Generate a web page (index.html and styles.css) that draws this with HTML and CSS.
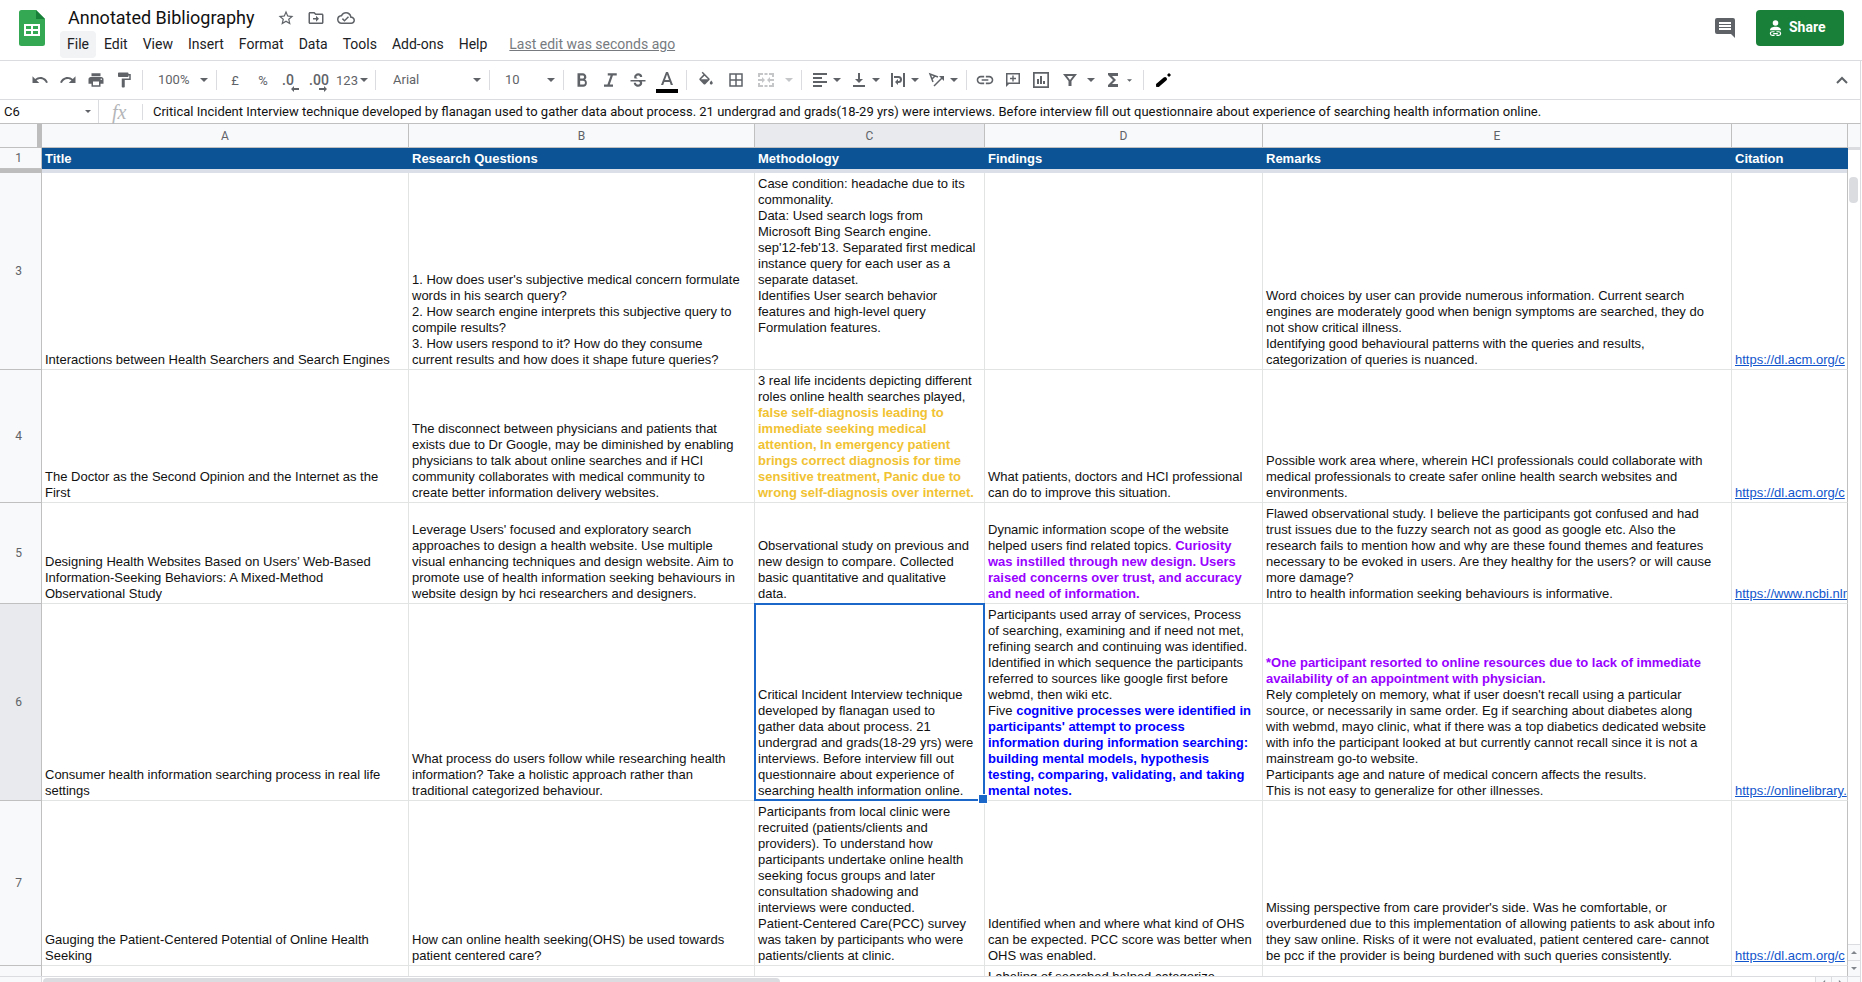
FILE: index.html
```html
<!DOCTYPE html>
<html lang="en">
<head>
<meta charset="utf-8">
<title>Annotated Bibliography</title>
<link rel="stylesheet" href="styles.css">
</head>
<body>
<svg class="defs" aria-hidden="true">
  <symbol id="arrow" viewBox="0 0 8 4"><path d="M0 0h8L4 4z"/></symbol>
</svg>

<header class="header">
  <svg class="logo" viewBox="0 0 26 36" aria-hidden="true">
    <path fill="#34a853" d="M2.500 0H17l9 9v24.500a2.500 2.500 0 0 1-2.500 2.500h-21A2.500 2.500 0 0 1 0 33.500v-31A2.500 2.500 0 0 1 2.500 0z"/>
    <path fill="#188038" d="M17 0l9 9h-9z"/>
    <path fill="#fff" fill-rule="evenodd" d="M5 14h16v12H5zM7 16v3h5v-3zM14 16v3h5v-3zM7 21v3h5v-3zM14 21v3h5v-3z"/>
  </svg>
  <div class="doc">
    <div class="title-row">
      <h1 class="title">Annotated Bibliography</h1>
      <button class="title-btn" aria-label="Star"><svg viewBox="0 0 24 24"><path d="M22 9.240l-7.190-.62L12 2 9.190 8.630 2 9.240l5.460 4.730L5.820 21 12 17.270 18.180 21l-1.630-7.030L22 9.240zM12 15.400l-3.760 2.270 1-4.280-3.320-2.880 4.380-.38L12 6.100l1.710 4.040 4.380.38-3.320 2.880 1 4.280L12 15.400z"/></svg></button>
      <button class="title-btn" aria-label="Move"><svg viewBox="0 0 24 24"><path d="M20 6h-8l-2-2H4c-1.100 0-2 .9-2 2v12c0 1.100.9 2 2 2h16c1.100 0 2-.9 2-2V8c0-1.100-.9-2-2-2zm0 12H4V6h5.170l2 2H20v10zm-8-1l4-4-4-4v3H8v2h4v3z"/></svg></button>
      <button class="title-btn" aria-label="Saved to Drive"><svg viewBox="0 0 24 24"><path d="M19.350 10.040A7.490 7.490 0 0 0 12 4C9.110 4 6.600 5.640 5.350 8.040A5.994 5.994 0 0 0 0 14c0 3.310 2.690 6 6 6h13c2.760 0 5-2.240 5-5 0-2.640-2.050-4.780-4.650-4.960zM19 18H6c-2.210 0-4-1.790-4-4 0-2.050 1.530-3.760 3.560-3.970l1.070-.11.500-.95A5.469 5.469 0 0 1 12 6c2.620 0 4.880 1.860 5.390 4.430l.3 1.500 1.530.11A2.980 2.980 0 0 1 22 15c0 1.650-1.350 3-3 3zm-9-3.820l-2.090-2.090L6.500 13.500 10 17l6.010-6.010-1.410-1.410z"/></svg></button>
    </div>
    <nav class="menu">
      <button class="menu-item active">File</button>
      <button class="menu-item">Edit</button>
      <button class="menu-item">View</button>
      <button class="menu-item">Insert</button>
      <button class="menu-item">Format</button>
      <button class="menu-item">Data</button>
      <button class="menu-item">Tools</button>
      <button class="menu-item">Add-ons</button>
      <button class="menu-item">Help</button>
      <a class="last-edit" href="#history">Last edit was seconds ago</a>
    </nav>
  </div>
  <button class="comments" aria-label="Comments"><svg viewBox="0 0 20 20"><path fill-rule="evenodd" d="M2 0h16a2 2 0 0 1 2 2v18l-4-4H2a2 2 0 0 1-2-2V2a2 2 0 0 1 2-2zM4 4v2h12V4zM4 7v2h12V7zM4 10v2h12v-2z"/></svg></button>
  <button class="share">
    <svg viewBox="0 0 14 18" aria-hidden="true"><circle cx="7" cy="3" r="3" fill="#fff"/><path fill="#fff" d="M1 11c0-3 3-4 6-4s6 1 6 4z"/><path fill="none" stroke="#fff" stroke-width="1.300" d="M6 12.500H3.500a2 2 0 0 0 0 4H6M8 12.500h2.500a2 2 0 0 1 0 4H8M4.500 14.500h5"/></svg>
    Share
  </button>
</header>

<div class="toolbar" role="toolbar">
  <button class="tool" aria-label="Undo"><svg viewBox="0 0 24 24"><path d="M12.500 8c-2.650 0-5.050.99-6.900 2.600L2 7v9h9l-3.620-3.620c1.390-1.160 3.160-1.880 5.120-1.880 3.540 0 6.550 2.310 7.600 5.500l2.370-.78C21.080 11.030 17.150 8 12.500 8z"/></svg></button>
  <button class="tool" aria-label="Redo"><svg viewBox="0 0 24 24"><path d="M18.400 10.600C16.550 8.990 14.150 8 11.500 8c-4.650 0-8.580 3.030-9.960 7.220L3.900 16c1.050-3.190 4.050-5.500 7.600-5.500 1.950 0 3.730.72 5.120 1.880L13 16h9V7l-3.600 3.600z"/></svg></button>
  <button class="tool" aria-label="Print"><svg viewBox="0 0 24 24"><path d="M19 8H5c-1.660 0-3 1.340-3 3v6h4v4h12v-4h4v-6c0-1.660-1.340-3-3-3zm-3 11H8v-5h8v5zm3-7c-.55 0-1-.45-1-1s.45-1 1-1 1 .45 1 1-.45 1-1 1zm-1-9H6v4h12V3z"/></svg></button>
  <button class="tool" aria-label="Paint format"><svg viewBox="0 0 24 24"><path d="M18 4V3c0-.55-.45-1-1-1H5c-.55 0-1 .45-1 1v4c0 .55.45 1 1 1h12c.55 0 1-.45 1-1V6h1v4H9v11c0 .55.45 1 1 1h2c.55 0 1-.45 1-1v-9h8V4h-3z"/></svg></button>
  <span class="sep"></span>
  <label class="drop"><select aria-label="Zoom"><option>100%</option></select><svg class="arrow"><use href="#arrow"/></svg></label>
  <span class="sep"></span>
  <button class="tool">£</button>
  <button class="tool">%</button>
  <button class="tool dec single" aria-label="Decrease decimal places">.0<svg viewBox="0 0 8 6"><path d="M0 3l3-3v2h5v2H3v2z"/></svg></button>
  <button class="tool dec" aria-label="Increase decimal places">.00<svg viewBox="0 0 8 6"><path d="M8 3L5 0v2H0v2h5v2z"/></svg></button>
  <button class="tool formats">123<svg class="arrow"><use href="#arrow"/></svg></button>
  <span class="sep"></span>
  <label class="drop font"><select aria-label="Font"><option>Arial</option></select><svg class="arrow"><use href="#arrow"/></svg></label>
  <span class="sep"></span>
  <label class="drop"><select aria-label="Font size"><option>10</option></select><svg class="arrow"><use href="#arrow"/></svg></label>
  <span class="sep"></span>
  <button class="tool" aria-label="Bold"><svg viewBox="0 0 24 24"><path d="M16 11.300c1.100-.7 1.800-1.900 1.800-3.100C17.800 5.300 15.900 3 13 3H6v18h7.800c2.600 0 4.700-2.200 4.700-5 0-2.200-1-3.900-2.500-4.700zM9.500 6H13c1 0 1.800.9 1.800 2s-.8 2-1.800 2H9.500zM13.500 18h-4v-5h4a2.500 2.500 0 0 1 0 5z"/></svg></button>
  <button class="tool" aria-label="Italic"><svg viewBox="0 0 24 24"><path d="M9 3v3h3.800L8.600 18H4v3h12v-3h-4.300L15.900 6H21V3z"/></svg></button>
  <button class="tool" aria-label="Strikethrough"><svg viewBox="0 0 24 24"><path d="M6.850 8.080C6.850 5.370 9.450 3 12.240 3c1.640 0 3 .49 3.900 1.280.77.65 1.460 1.730 1.460 3.740h-3.010c0-.31-.05-.59-.15-.85-.29-.86-1.200-1.280-2.250-1.280-1.860 0-2.340 1.020-2.340 1.700 0 .48.25 1.380.74 1.710.38.25.77.48 1.410.70H7.390c-.21-.34-.54-.89-.54-1.920zM22 14v-2H2v2h10.620c1.150.45 1.960.75 1.960 1.970 0 1-.81 2.170-2.280 2.170-1.540 0-2.930-.54-2.930-2.510H6.400c0 .55.08 1.130.24 1.580.81 2.290 3.290 3.800 5.670 3.800 2.270 0 5.300-1.390 5.300-4.550 0-.3-.01-1.160-.48-2.460z"/></svg></button>
  <button class="tool roomy color" aria-label="Text color"><svg viewBox="0 0 22 22"><path fill-rule="evenodd" d="M10 1h2l5 13h-2.200l-1.100-3H8.300l-1.100 3H5zM9 9h4l-2-5.500z"/><path fill="#000" d="M0 18h22v4H0z"/></svg></button>
  <span class="sep"></span>
  <button class="tool roomy" aria-label="Fill color"><svg viewBox="0 0 24 24"><path d="M16.560 9.940L7.620 1 6.210 2.410l2.380 2.380-5.150 5.150c-.59.59-.59 1.540 0 2.120l5.500 5.500c.29.29.68.44 1.060.44s.77-.15 1.060-.44l5.500-5.500c.59-.58.59-1.530 0-2.120zM5.210 11L10 6.210 14.790 11H5.210zM19 12.500s-2 2.170-2 3.500c0 1.100.9 2 2 2s2-.9 2-2c0-1.330-2-3.500-2-3.500z"/></svg></button>
  <button class="tool roomy" aria-label="Borders"><svg viewBox="0 0 24 24"><path d="M3 3v18h18V3H3zm8 16H5v-6h6v6zm0-8H5V5h6v6zm8 8h-6v-6h6v6zm0-8h-6V5h6v6z"/></svg></button>
  <button class="tool roomy" aria-label="Merge cells" disabled><svg viewBox="0 0 18 18"><path d="M1 2h5v2H3v2H1zM7.500 2h3v2h-3zM12 2h5v4h-2V4h-3zM1 12h2v2h3v2H1zM7.500 14h3v2h-3zM15 12h2v4h-5v-2h3zM1 8h4V6l3 3-3 3v-2H1zM17 8h-4V6l-3 3 3 3v-2h4z"/></svg></button>
  <button class="tool caret" aria-label="Merge options" disabled><svg class="arrow"><use href="#arrow"/></svg></button>
  <span class="sep"></span>
  <button class="tool pair" aria-label="Horizontal align"><svg viewBox="0 0 18 18"><path d="M2 2h14v2H2zM2 6h9v2H2zM2 10h14v2H2zM2 14h9v2H2z"/></svg><svg class="arrow"><use href="#arrow"/></svg></button>
  <button class="tool pair" aria-label="Vertical align"><svg viewBox="0 0 18 18"><path d="M8 2h2v6h3l-4 4-4-4h3zM3 14h12v2H3z"/></svg><svg class="arrow"><use href="#arrow"/></svg></button>
  <button class="tool pair" aria-label="Text wrapping"><svg viewBox="0 0 18 18"><path d="M2 2h2v14H2zM14 2h2v14h-2z"/><path d="M5 5h4.500a3.500 3.500 0 0 1 0 7H9v2l-3-3 3-3v2h.5a1.500 1.500 0 0 0 0-3H5z"/></svg><svg class="arrow"><use href="#arrow"/></svg></button>
  <button class="tool pair" aria-label="Text rotation"><svg viewBox="0 0 18 18"><path fill="none" stroke="#5f6368" stroke-width="1.500" d="M5 11L2 3l8 3M4 8l3-3M6 15l8-8"/><path d="M16 5v5l-5-5z"/></svg><svg class="arrow"><use href="#arrow"/></svg></button>
  <span class="sep"></span>
  <button class="tool big" aria-label="Insert link"><svg viewBox="0 0 24 24"><path d="M3.900 12c0-1.710 1.390-3.100 3.100-3.100h4V7H7c-2.760 0-5 2.240-5 5s2.240 5 5 5h4v-1.900H7c-1.710 0-3.100-1.390-3.100-3.100zM8 13h8v-2H8v2zm9-6h-4v1.900h4c1.710 0 3.100 1.390 3.100 3.100s-1.390 3.100-3.100 3.100h-4V17h4c2.760 0 5-2.240 5-5s-2.240-5-5-5z"/></svg></button>
  <button class="tool" aria-label="Insert comment"><svg viewBox="0 0 18 18"><path fill-rule="evenodd" d="M2 2h14v11H5l-3 3zM3.500 3.500v8h11v-8zM8.300 4.500h1.400v2.300H12v1.400H9.700v2.300H8.300V8.200H6V6.800h2.300z"/></svg></button>
  <button class="tool" aria-label="Insert chart"><svg viewBox="0 0 18 18"><path fill-rule="evenodd" d="M1 1h16v16H1zM2.700 2.700v12.600h12.600V2.700zM5 8h2v5H5zM8 5h2v8H8zM11 10h2v3h-2z"/></svg></button>
  <button class="tool" aria-label="Filter"><svg viewBox="0 0 18 18"><path fill-rule="evenodd" d="M3 3h14l-5.500 7v5h-3v-5zM7 5l3 4 3-4z"/></svg></button>
  <button class="tool caret" aria-label="Filter views"><svg class="arrow"><use href="#arrow"/></svg></button>
  <button class="tool" aria-label="Functions"><svg viewBox="0 0 18 18"><path d="M4 2h10v3H8l4 4-4 4h6v3H4v-2l5-5-5-5z"/></svg></button>
  <button class="tool tiny" aria-label="More functions"><svg class="arrow"><use href="#arrow"/></svg></button>
  <span class="sep"></span>
  <button class="tool roomy" aria-label="Input tools"><svg viewBox="0 0 18 18"><path fill="none" stroke="#000" stroke-width="4" stroke-linecap="round" d="M4 14l7-6"/><path fill="#000" d="M2 16l1-4 3 3zM13 4l2-2 2 2-2 2z"/></svg></button>
  <button class="tool collapse" aria-label="Hide the menus"><svg viewBox="0 0 18 18"><path fill="none" stroke="#5f6368" stroke-width="2" d="M4 12l5-5 5 5"/></svg></button>
</div>

<div class="formula-bar">
  <div class="name-box"><input type="text" aria-label="Name box" value="C6"><svg class="arrow"><use href="#arrow"/></svg></div>
  <span class="fx">fx</span>
  <input class="formula" type="text" aria-label="Formula" value="Critical Incident Interview technique developed by flanagan used to gather data about process. 21 undergrad and grads(18-29 yrs) were interviews. Before interview fill out questionnaire about experience of searching health information online.">
</div>

<main class="sheet">
  <div class="grid">
    <table>
      <colgroup><col class="c-num"><col class="c-a"><col class="c-b"><col class="c-c"><col class="c-d"><col class="c-e"><col></colgroup>
      <thead>
        <tr class="letters"><th class="corner"></th><th>A</th><th>B</th><th class="on">C</th><th>D</th><th>E</th><th></th></tr>
        <tr class="labels"><th class="num">1</th><th>Title</th><th>Research Questions</th><th>Methodology</th><th>Findings</th><th>Remarks</th><th>Citation</th></tr>
        <tr class="freeze"><td></td><td colspan="6"></td></tr>
      </thead>
      <tbody>
        <tr>
          <th class="num">3</th>
          <td>Interactions between Health Searchers and Search Engines</td>
          <td>1. How does user's subjective medical concern formulate<br>words in his search query?<br>2. How search engine interprets this subjective query to<br>compile results?<br>3. How users respond to it? How do they consume<br>current results and how does it shape future queries?</td>
          <td>Case condition: headache due to its<br>commonality.<br>Data: Used search logs from<br>Microsoft Bing Search engine.<br>sep'12-feb'13. Separated first medical<br>instance query for each user as a<br>separate dataset.<br>Identifies User search behavior<br>features and high-level query<br>Formulation features.<br><br>&nbsp;</td>
          <td></td>
          <td>Word choices by user can provide numerous information. Current search<br>engines are moderately good when benign symptoms are searched, they do<br>not show critical illness.<br>Identifying good behavioural patterns with the queries and results,<br>categorization of queries is nuanced.</td>
          <td><a href="https://dl.acm.org/c">https://dl.acm.org/c</a></td>
        </tr>
        <tr>
          <th class="num">4</th>
          <td>The Doctor as the Second Opinion and the Internet as the<br>First</td>
          <td>The disconnect between physicians and patients that<br>exists due to Dr Google, may be diminished by enabling<br>physicians to talk about online searches and if HCI<br>community collaborates with medical community to<br>create better information delivery websites.</td>
          <td>3 real life incidents depicting different<br>roles online health searches played,<br><b class="gold">false self-diagnosis leading to<br>immediate seeking medical<br>attention, In emergency patient<br>brings correct diagnosis for time<br>sensitive treatment, Panic due to<br>wrong self-diagnosis over internet.</b></td>
          <td>What patients, doctors and HCI professional<br>can do to improve this situation.</td>
          <td>Possible work area where, wherein HCI professionals could collaborate with<br>medical professionals to create safer online health search websites and<br>environments.</td>
          <td><a href="https://dl.acm.org/c">https://dl.acm.org/c</a></td>
        </tr>
        <tr>
          <th class="num">5</th>
          <td>Designing Health Websites Based on Users’ Web-Based<br>Information-Seeking Behaviors: A Mixed-Method<br>Observational Study</td>
          <td>Leverage Users' focused and exploratory search<br>approaches to design a health website. Use multiple<br>visual enhancing techniques and design website. Aim to<br>promote use of health information seeking behaviours in<br>website design by hci researchers and designers.</td>
          <td>Observational study on previous and<br>new design to compare. Collected<br>basic quantitative and qualitative<br>data.</td>
          <td>Dynamic information scope of the website<br>helped users find related topics. <b class="purple">Curiosity<br>was instilled through new design. Users<br>raised concerns over trust, and accuracy<br>and need of information.</b></td>
          <td>Flawed observational study. I believe the participants got confused and had<br>trust issues due to the fuzzy search not as good as google etc. Also the<br>research fails to mention how and why are these found themes and features<br>necessary to be evoked in users. Are they healthy for the users? or will cause<br>more damage?<br>Intro to health information seeking behaviours is informative.</td>
          <td><a href="https://www.ncbi.nlm">https://www.ncbi.nlm</a></td>
        </tr>
        <tr>
          <th class="num on">6</th>
          <td>Consumer health information searching process in real life<br>settings</td>
          <td>What process do users follow while researching health<br>information? Take a holistic approach rather than<br>traditional categorized behaviour.</td>
          <td class="selected">Critical Incident Interview technique<br>developed by flanagan used to<br>gather data about process. 21<br>undergrad and grads(18-29 yrs) were<br>interviews. Before interview fill out<br>questionnaire about experience of<br>searching health information online.</td>
          <td>Participants used array of services, Process<br>of searching, examining and if need not met,<br>refining search and continuing was identified.<br>Identified in which sequence the participants<br>referred to sources like google first before<br>webmd, then wiki etc.<br>Five <b class="blue">cognitive processes were identified in<br>participants' attempt to process<br>information during information searching:<br>building mental models, hypothesis<br>testing, comparing, validating, and taking<br>mental notes.</b></td>
          <td><b class="purple">*One participant resorted to online resources due to lack of immediate<br>availability of an appointment with physician.</b><br>Rely completely on memory, what if user doesn't recall using a particular<br>source, or necessarily in same order. Eg if searching about diabetes along<br>with webmd, mayo clinic, what if there was a top diabetics dedicated website<br>with info the participant looked at but currently cannot recall since it is not a<br>mainstream go-to website.<br>Participants age and nature of medical concern affects the results.<br>This is not easy to generalize for other illnesses.</td>
          <td><a href="https://onlinelibrary.">https://onlinelibrary.</a></td>
        </tr>
        <tr>
          <th class="num">7</th>
          <td>Gauging the Patient-Centered Potential of Online Health<br>Seeking</td>
          <td>How can online health seeking(OHS) be used towards<br>patient centered care?</td>
          <td>Participants from local clinic were<br>recruited (patients/clients and<br>providers). To understand how<br>participants undertake online health<br>seeking focus groups and later<br>consultation shadowing and<br>interviews were conducted.<br>Patient-Centered Care(PCC) survey<br>was taken by participants who were<br>patients/clients at clinic.</td>
          <td>Identified when and where what kind of OHS<br>can be expected. PCC score was better when<br>OHS was enabled.</td>
          <td>Missing perspective from care provider's side. Was he comfortable, or<br>overburdened due to this implementation of allowing patients to ask about info<br>they saw online. Risks of it were not evaluated, patient centered care- cannot<br>be pcc if the provider is being burdened with such queries consistently.</td>
          <td><a href="https://dl.acm.org/c">https://dl.acm.org/c</a></td>
        </tr>
        <tr><th class="num"></th><td></td><td></td><td></td><td>Labeling of searched helped categorize</td><td></td><td></td></tr>
      </tbody>
    </table>
  </div>
  <div class="vbar">
    <div class="vbar-head"></div>
    <div class="vtrack"><div class="vthumb"></div></div>
    <button class="step" aria-label="Scroll up"><svg class="up"><use href="#arrow"/></svg></button>
    <button class="step" aria-label="Scroll down"><svg><use href="#arrow"/></svg></button>
  </div>
  <div class="hbar">
    <div class="hpad"></div>
    <div class="htrack"><div class="hthumb"></div></div>
    <button class="step side" aria-label="Scroll left"><svg class="left"><use href="#arrow"/></svg></button>
    <button class="step side" aria-label="Scroll right"><svg class="right"><use href="#arrow"/></svg></button>
    <div class="hend"></div>
  </div>
</main>
</body>
</html>
```
FILE: styles.css
```css
* { box-sizing: border-box; }

body {
  margin: 0;
  height: 100vh;
  display: flex;
  flex-direction: column;
  overflow: hidden;
  background: #fff;
  color: #111;
  font-family: Roboto, "Liberation Sans", sans-serif;
}

button, input, select {
  border: 0;
  padding: 0;
  margin: 0;
  background: none;
  font: inherit;
  color: inherit;
  outline: 0;
}

select { appearance: none; }

.defs { position: absolute; width: 0; height: 0; }

/* Header */
.header {
  display: flex;
  align-items: flex-start;
  flex: none;
  height: 61px;
  padding: 0 18px 0 19px;
  border-bottom: 1px solid #dadce0;
}

.logo { width: 26px; height: 36px; margin-top: 10px; flex: none; }
.doc { flex: 1; min-width: 0; padding-left: 15px; }

.title-row { display: flex; align-items: center; height: 31px; padding: 5px 0 0 8px; }
.title { margin: 0 16px 0 0; font-size: 18px; line-height: 26px; font-weight: 400; white-space: nowrap; }
.title-btn { display: flex; justify-content: center; width: 30px; }
.title-btn svg { width: 18px; height: 18px; fill: #5f6368; }

.menu { display: flex; align-items: center; gap: 1px; }
.menu-item {
  height: 27px;
  padding: 0 7px;
  border-radius: 4px;
  font-size: 14px;
  line-height: 27px;
  color: #202124;
}
.menu-item.active { background: #f1f3f4; }
.last-edit { margin-left: 14px; font-size: 14px; line-height: 27px; color: #777b80; white-space: nowrap; }

.comments { margin: 18px 21px 0 0; width: 20px; height: 20px; }
.comments svg { display: block; width: 20px; height: 20px; fill: #5f6368; }

.share {
  display: flex;
  align-items: center;
  gap: 7px;
  width: 88px;
  height: 36px;
  margin-top: 10px;
  padding: 0 0 2px 13px;
  border-radius: 4px;
  background: #188038;
  color: #fff;
  font-size: 14px;
  font-weight: 700;
}
.share svg { width: 13px; height: 17px; margin-top: 2px; }

/* Toolbar */
.toolbar {
  display: flex;
  align-items: center;
  flex: none;
  height: 39px;
  margin-right: 1px;
  padding: 0 4px 0 26px;
  border-right: 1px solid #dadce0;
  border-bottom: 1px solid #dadce0;
  color: #5f6368;
  font-size: 13px;
}

.tool { display: flex; align-items: center; justify-content: center; flex: none; width: 28px; height: 28px; }
.tool svg { width: 18px; height: 18px; fill: #5f6368; flex: none; }
.tool:disabled svg { fill: #c4c6c8; }
.tool.roomy { width: 30px; }
.tool.big svg { width: 20px; height: 20px; }
.tool.color svg { width: 22px; height: 22px; margin-top: 4px; }
.tool.caret { width: 16px; }
.tool.tiny { width: 12px; justify-content: flex-start; }
.tool.pair { width: 39px; gap: 4px; }
.tool.formats { width: 38px; gap: 2px; }
.tool.dec { position: relative; font-size: 14px; font-weight: 500; }
.tool.dec.single { padding-right: 6px; }
.tool.dec svg { position: absolute; right: 6px; bottom: 2px; width: 8px; height: 6px; }
.tool .arrow, .arrow { width: 8px; height: 4px; fill: #5f6368; flex: none; }
.tool.tiny .arrow { width: 5px; height: 3px; }
.tool.collapse { margin-left: auto; }

.sep { width: 1px; height: 20px; margin: 0 4px; background: #dadce0; flex: none; }

.drop { display: flex; align-items: center; width: 65px; padding: 0 4px 0 11px; flex: none; }
.drop.font { width: 105px; padding-left: 13px; }
.drop select { flex: 1; min-width: 0; line-height: 20px; }

/* Formula bar */
.formula-bar {
  display: flex;
  align-items: center;
  flex: none;
  height: 24px;
  margin-right: 1px;
  border-right: 1px solid #dadce0;
  border-bottom: 1px solid #c0c0c0;
  font-size: 13px;
}
.name-box { display: flex; align-items: center; width: 99px; height: 23px; padding: 0 7px 0 4px; border-right: 1px solid #dadce0; }
.name-box input { flex: 1; min-width: 0; }
.name-box .arrow { width: 6px; height: 3px; }
.fx {
  width: 44px;
  padding-left: 13px;
  border-right: 1px solid #dadce0;
  color: #b4b6b9;
  font: italic 20px/16px "Liberation Serif", serif;
}
.formula { flex: 1; min-width: 0; padding-left: 10px; }

/* Sheet */
.sheet {
  display: grid;
  grid-template: minmax(0, 1fr) 6px / minmax(0, 1fr) 12px;
  flex: 1;
  min-height: 0;
  margin-right: 1px;
  border-right: 1px solid #dadce0;
}
.grid { overflow: hidden; }

table { width: 100%; table-layout: fixed; border-collapse: separate; border-spacing: 0; }
.c-num { width: 42px; }
.c-a { width: 367px; }
.c-b { width: 346px; }
.c-c { width: 230px; }
.c-d { width: 278px; }
.c-e { width: 469px; }

th, td {
  padding: 3px 3px 1px;
  border-right: 1px solid #e2e3e3;
  border-bottom: 1px solid #e2e3e3;
  vertical-align: bottom;
  text-align: left;
  font: 13px/16px "Liberation Sans", Arial, sans-serif;
  white-space: nowrap;
}
td:last-child { overflow: hidden; border-right-color: #c0c0c0; }
td a { color: #1155cc; }

.letters th, .num {
  background: #f8f9fa;
  border-color: #c0c0c0;
  color: #5f6368;
  font: 12px/19px Roboto, sans-serif;
  text-align: center;
}
.letters th.corner { border-right: 5px solid #bdbdbd; }
.num { padding: 0 4px 0 0; vertical-align: middle; line-height: 16px; }
.letters th.on, .num.on { background: #e8eaed; }

.labels th:not(.num) { background: #0b5394; border-color: #0b5394; color: #fff; font-weight: 700; }
.freeze td { height: 4px; padding: 0; border-bottom: 0; background: #dadfe8; }
.freeze td:first-child { background: #bdbdbd; border-right-color: #bdbdbd; }

.gold { color: #f1c232; }
.purple { color: #9900ff; }
.blue { color: #0000ff; }

.selected { position: relative; }
.selected::before { content: ""; position: absolute; inset: -1px; border: 2px solid #1a66c9; }
.selected::after {
  content: "";
  position: absolute;
  right: -4px;
  bottom: -4px;
  width: 8px;
  height: 8px;
  border: 1px solid #fff;
  background: #1a66c9;
}

/* Scrollbars */
.vbar { display: flex; flex-direction: column; }
.vbar-head { height: 26px; background: #f8f9fa; border-bottom: 3px solid #dadce0; }
.vtrack { flex: 1; padding: 27px 2px 0 1px; }
.vthumb { height: 26px; border-radius: 4px; background: #dadce0; }
.step {
  display: flex;
  align-items: center;
  justify-content: center;
  flex: none;
  height: 16px;
  background: #f8f9fa;
  border-top: 1px solid #dadce0;
}
.step svg { width: 6px; height: 3px; fill: #80868b; }
.step .up { transform: rotate(180deg); }
.step .left { transform: rotate(90deg); }
.step .right { transform: rotate(-90deg); }

.hbar { grid-column: 1 / -1; display: flex; align-items: flex-start; overflow: hidden; border-top: 1px solid #dadce0; }
.hpad { width: 42px; height: 6px; background: #f8f9fa; border-right: 1px solid #dadce0; }
.htrack { flex: 1; padding: 1px 0 0 1px; }
.hthumb { width: 737px; max-width: 100%; height: 8px; border-radius: 4px; background: #dadce0; }
.step.side { width: 16px; height: 11px; border-top: 0; border-left: 1px solid #dadce0; }
.hend { width: 13px; height: 6px; background: #f8f9fa; border-left: 1px solid #dadce0; }
```
